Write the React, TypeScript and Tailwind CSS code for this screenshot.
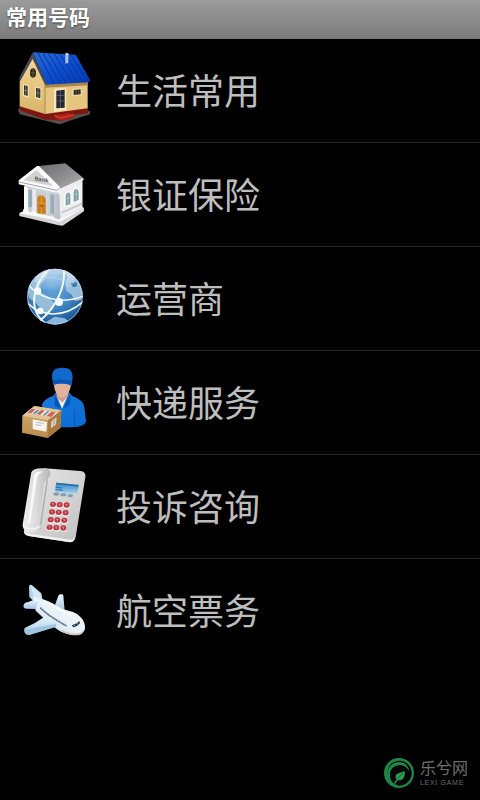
import React from 'react';

const HouseIcon = () => (
  <svg viewBox="0 3 270 270" className="size-full" aria-hidden="true">
    <defs>
      <linearGradient id="houseRoof" x1="0" y1="0" x2="1" y2="1">
        <stop offset="0" stopColor="#2a6cd8" />
        <stop offset="0.5" stopColor="#0b4fd0" />
        <stop offset="1" stopColor="#0736b0" />
      </linearGradient>
      <linearGradient id="houseWall" x1="0" y1="0" x2="0" y2="1">
        <stop offset="0" stopColor="#f2d793" />
        <stop offset="1" stopColor="#d9b46a" />
      </linearGradient>
    </defs>
    <path d="M24 197L28 188L105 214L240 198V208L176 228L150 238L30 208Z" fill="#55504e" />
    <path d="M29 182L105 204L234 188V204L192 210V218L153 228L130 224L105 224L29 196Z" fill="#7e1512" />
    <path d="M133 211L176 204L192 209V218L153 228L133 219Z" fill="#a92118" />
    <path d="M133 211L153 219L192 209" fill="none" stroke="#d44a38" strokeWidth="3" />
    <path d="M67 38L29 108V184L105 207V115Z" fill="url(#houseWall)" />
    <path d="M105 115L233 108V190L105 207Z" fill="#e5c580" />
    <path d="M105 115L233 108V121L105 128Z" fill="#a88649" />
    <path d="M105 118V207" stroke="#b18b4a" strokeWidth="3" />
    <path d="M68 22L197 29L241 106L236 112L111 119Z" fill="url(#houseRoof)" />
    <path d="M84 24L132 116M100 25L150 115M116 26L168 114M133 27L186 113M150 28L203 112M167 29L219 111M183 30L233 109" stroke="#07369b" strokeWidth="3" />
    <path d="M68 23L27 100L31 107L68 42L105 119L112 119Z" fill="#4b4a5c" />
    <path d="M166 30L175 27V53L166 56Z" fill="#a8c4e8" />
    <path d="M164 27L170 23L178 27L172 31Z" fill="#d4def0" />
    <ellipse cx="69" cy="84" rx="9" ry="14" fill="#282421" />
    <path d="M69 71V97M61 84H77" stroke="#8d7444" strokeWidth="2" />
    <path d="M39 117L56 120V158L39 153ZM75 124L94 128V165L75 160Z" fill="#f7e6b5" />
    <path d="M42 121L53 123V153L42 149ZM78 128L91 131V160L78 156Z" fill="#29313f" />
    <path d="M47 122V151M84 129V158M42 136L53 138M78 143L91 145" stroke="#ad9865" strokeWidth="2" />
    <path d="M132 131L169 128V196L132 201Z" fill="#f5e5bd" />
    <path d="M139 137L164 134V188L139 190Z" fill="#22262f" />
    <path d="M151 136V188M139 151H164M139 168H164" stroke="#70778a" strokeWidth="2" />
    <path d="M187 132L215 129V151L187 154Z" fill="#f3dfad" />
    <path d="M191 135L212 133V148L191 150Z" fill="#282b30" />
    <path d="M198 134V149M205 133V148" stroke="#8e8058" strokeWidth="1.5" />
  </svg>
);

const BankIcon = () => (
  <svg viewBox="0 0 270 270" className="size-full" aria-hidden="true">
    <defs>
      <linearGradient id="bankRoof" x1="0" y1="0" x2="1" y2="1">
        <stop offset="0" stopColor="#6d6d70" />
        <stop offset="0.6" stopColor="#929294" />
        <stop offset="1" stopColor="#b9b9bb" />
      </linearGradient>
      <linearGradient id="bankColumn" x1="0" y1="0" x2="1" y2="0">
        <stop offset="0" stopColor="#ffffff" />
        <stop offset="1" stopColor="#b9bdc8" />
      </linearGradient>
    </defs>
    <path d="M28 190L55 176L198 164L222 174V184L158 227L146 226L28 198Z" fill="#d5d5d8" />
    <path d="M28 190L55 178L207 169L222 174L153 214Z" fill="#fafafa" />
    <path d="M44 98L147 119L217 88V175L154 205L44 184Z" fill="#cbd0d8" />
    <path d="M143 122L217 88V173L153 205Z" fill="#eeeef0" />
    <path d="M55 119L68 121V172L55 171ZM117 132L133 135V194L117 187Z" fill="#91afb8" />
    <path d="M66 122L82 125V185L66 180ZM106 128L121 132V193L106 189Z" fill="#b3b9c7" />
    <path d="M79 190V145C80 130 103 128 108 147V194Z" fill="#d8c19b" />
    <path d="M82 189V147C83 133 103 133 107 149V192Z" fill="#c47c20" />
    <path d="M94 139V191M85 158L105 161" stroke="#ed9f36" strokeWidth="3" />
    <circle cx="95" cy="167" r="3" fill="#7d440d" />
    <path d="M42 109L54 112V184L42 180ZM67 116L79 119V190L67 187ZM108 124L121 128V202L108 197ZM132 130L149 135V211L132 205Z" fill="url(#bankColumn)" />
    <path d="M39 178L57 183V189L39 184ZM64 184L82 189V195L64 190ZM105 195L123 200V207L105 202ZM129 204L151 210V217L129 211Z" fill="#f9f9fa" />
    <path d="M85 48L166 40L220 84V91L149 119Z" fill="url(#bankRoof)" />
    <path d="M81 48L26 91V103L140 128L152 120L149 110L87 48Z" fill="#fafafa" />
    <path d="M80 60L40 91L130 109Z" fill="#d2d2d3" />
    <path d="M28 96L140 121L149 116" fill="none" stroke="#a5a5a8" strokeWidth="3" />
    <path d="M149 119L220 87" stroke="#f2f2f3" strokeWidth="5" />
    <text x="73" y="91" fontFamily="Liberation Sans, sans-serif" fontSize="17" fontWeight="bold" fill="#555558" transform="rotate(9 73 91)">Bank</text>
    <path d="M163 172V137C167 121 181 119 184 132V166ZM188 160V128C189 109 206 106 209 123V153Z" fill="#ffffff" />
    <path d="M167 167V138C169 125 179 125 181 134V163ZM191 156V128C193 113 203 113 206 125V150Z" fill="#7d9ba3" />
    <path d="M174 129V164M169 146L179 143M199 116V152M193 134L204 130" stroke="#cad4d7" strokeWidth="2" />
    <path d="M154 188L216 161" stroke="#c1c2c7" strokeWidth="5" />
  </svg>
);

const GlobeIcon = () => (
  <svg viewBox="-15 -3 270 270" className="size-full" aria-hidden="true">
    <defs>
      <radialGradient id="globeSea" cx="0.45" cy="0.3" r="0.7">
        <stop offset="0" stopColor="#69a9dc" />
        <stop offset="0.55" stopColor="#4389c7" />
        <stop offset="1" stopColor="#19558e" />
      </radialGradient>
      <linearGradient id="globeShine" x1="0" y1="0" x2="0" y2="1">
        <stop offset="0" stopColor="#ffffff" stopOpacity="0.7" />
        <stop offset="1" stopColor="#ffffff" stopOpacity="0" />
      </linearGradient>
      <clipPath id="globeClip">
        <circle cx="120" cy="125" r="84" />
      </clipPath>
    </defs>
    <circle cx="120" cy="125" r="84" fill="url(#globeSea)" />
    <g clipPath="url(#globeClip)">
      <path d="M35 96L49 68L76 45L101 53L88 75L76 88L78 112L102 127L119 145L113 164L95 174L79 166L65 146L42 128Z" fill="#aac9df" opacity="0.8" />
      <path d="M145 42L171 54L194 83L205 113L198 135L180 138L169 118L154 109L151 82L158 65Z" fill="#a7c8e0" opacity="0.85" />
      <path d="M166 84L184 82L187 93L174 97Z" fill="#3c79ae" />
      <path d="M119 185L150 190L166 204L125 214L92 202Z" fill="#8ab7db" />
      <ellipse cx="120" cy="73" rx="60" ry="36" fill="url(#globeShine)" />
      <g fill="none" stroke="#eef8ff">
        <path d="M31 77C61 127 137 153 210 122" strokeWidth="5" />
        <path d="M36 143C80 188 148 190 206 139" strokeWidth="5" />
        <path d="M103 43C64 75 45 137 66 176C71 187 80 196 91 206" strokeWidth="6" />
        <path d="M146 39C153 94 125 156 73 199" strokeWidth="6" />
        <path d="M53 83C67 68 104 61 142 75" stroke="#c3e1f5" strokeWidth="2" />
      </g>
    </g>
    <circle cx="120" cy="125" r="82" fill="none" stroke="#b7d9ef" strokeOpacity="0.6" strokeWidth="3" />
    <circle cx="68" cy="108" r="11" fill="#f2faff" />
    <circle cx="132" cy="141" r="12" fill="#f2faff" />
    <circle cx="76" cy="168" r="10" fill="#f2faff" />
  </svg>
);

const CourierIcon = () => (
  <svg viewBox="0 -6 270 270" className="size-full" aria-hidden="true">
    <defs>
      <linearGradient id="courierShirt" x1="0" y1="0" x2="1" y2="1">
        <stop offset="0" stopColor="#1c7ae0" />
        <stop offset="1" stopColor="#086bd1" />
      </linearGradient>
      <linearGradient id="courierBox" x1="0" y1="0" x2="0" y2="1">
        <stop offset="0" stopColor="#d2ad72" />
        <stop offset="1" stopColor="#b88c4b" />
      </linearGradient>
    </defs>
    <path d="M96 135C99 122 112 114 130 107L139 95H176L187 109C211 118 221 126 223 143L228 181C229 194 214 201 185 202H108Z" fill="url(#courierShirt)" />
    <path d="M142 112L156 146L171 112L168 104H146Z" fill="#f3f6fb" />
    <path d="M140 94H174V108L157 128L140 111Z" fill="#d69c83" />
    <path d="M131 66H184C183 88 172 112 157 113C141 111 132 92 131 66Z" fill="#e4b39c" />
    <path d="M126 48C127 29 137 23 158 23C178 23 187 32 188 50L185 76C174 67 143 67 129 75Z" fill="#1269cd" />
    <path d="M129 61C145 57 170 57 186 63L184 77C169 69 144 70 130 75Z" fill="#0756b8" />
    <path d="M134 100L154 146L134 138ZM181 100L159 146L181 134Z" fill="#0757b7" />
    <path d="M194 148V197" stroke="#085abc" strokeWidth="3" />
    <path d="M37 167L73 138L154 151L151 204L113 234L36 218Z" fill="url(#courierBox)" />
    <path d="M37 167L73 138L154 151L114 181Z" fill="#e0c494" />
    <path d="M114 181L154 151L151 204L113 234Z" fill="#a9793d" />
    <path d="M51 158L66 145L142 158L126 172Z" fill="#eee9e1" />
    <path d="M52 158L65 146L77 148L64 160ZM79 162L94 150L104 152L90 165ZM109 168L124 155L137 157L124 171Z" fill="#ca625a" />
    <path d="M68 160L82 149L89 150L75 162ZM98 166L113 153L119 154L104 167Z" fill="#648ba4" />
    <path d="M68 178L111 186L109 215L68 207Z" fill="#f8f5ef" />
    <path d="M78 187L101 190M77 194L94 197" stroke="#909ca9" strokeWidth="2" />
    <path d="M124 184L140 172L138 193L123 205Z" fill="#dddad2" />
    <path d="M128 187L136 181M128 194L136 188" stroke="#93652e" strokeWidth="2" />
  </svg>
);

const keypadRows = [
  [128, 133],
  [125, 156],
  [121, 179],
  [118, 202],
];

const PhoneIcon = () => (
  <svg viewBox="0 6 270 270" className="size-full" aria-hidden="true">
    <defs>
      <linearGradient id="phoneBody" x1="0" y1="0" x2="1" y2="1">
        <stop offset="0" stopColor="#e6e6e6" />
        <stop offset="0.6" stopColor="#d1d1d1" />
        <stop offset="1" stopColor="#bfbfbf" />
      </linearGradient>
      <linearGradient id="phoneHandset" x1="0" y1="0" x2="1" y2="0">
        <stop offset="0" stopColor="#eeeeee" />
        <stop offset="0.5" stopColor="#dcdcdc" />
        <stop offset="1" stopColor="#b4b4b4" />
      </linearGradient>
      <linearGradient id="phoneScreen" x1="0" y1="0" x2="0" y2="1">
        <stop offset="0" stopColor="#2f82c4" />
        <stop offset="1" stopColor="#a4d3ef" />
      </linearGradient>
    </defs>
    <path d="M103 25L211 33C223 35 228 41 226 51L197 232C195 242 188 247 177 246L57 228C45 226 40 220 42 211L67 40Z" fill="url(#phoneBody)" />
    <path d="M43 213L58 221L180 239C189 240 193 236 195 229L193 238C190 246 185 248 175 246L55 228C47 226 42 222 43 213Z" fill="#f1f1f1" />
    <path d="M112 58L90 208" stroke="#aaaaaa" strokeWidth="4" />
    <path d="M64 37C70 26 85 23 109 26C121 28 123 38 119 49C115 59 104 60 102 70L86 182C86 190 94 191 93 199C90 214 75 220 57 217C43 213 37 204 38 193Z" fill="url(#phoneHandset)" />
    <path d="M73 42C76 35 88 33 101 35C88 37 82 46 80 58L61 187L53 199Z" fill="#fafafa" />
    <path d="M40 196C50 209 76 211 89 198" fill="none" stroke="#f8f8f8" strokeWidth="4" />
    <path d="M139 68L206 75L202 101L134 94Z" fill="url(#phoneScreen)" />
    <path d="M139 68L206 75L205 80L138 73Z" fill="#286da8" />
    <path d="M137 82L157 84M137 89L158 91" stroke="#216cae" strokeWidth="3" />
    <g fill="#7f9fb3">
      <ellipse cx="139" cy="102" rx="9" ry="5" />
      <ellipse cx="160" cy="104" rx="9" ry="5" />
      <ellipse cx="181" cy="107" rx="8" ry="5" />
    </g>
    {keypadRows.map(([x, y]) => (
      <g key={y}>
        {[0, 20, 41].map((dx) => (
          <g key={dx}>
            <ellipse cx={x + dx + 2} cy={y + 3 + dx / 20} rx="10" ry="9" fill="#f1f1f1" />
            <ellipse cx={x + dx + 1} cy={y + dx / 20} rx="9" ry="8" fill="#bc3440" />
            <path d={`M${x + dx - 3} ${y - 2 + dx / 20}h7m-3 0v6`} stroke="#eda1a5" strokeWidth="2" />
          </g>
        ))}
      </g>
    ))}
  </svg>
);

const PlaneIcon = () => (
  <svg viewBox="0 -12 270 270" className="size-full" aria-hidden="true">
    <defs>
      <linearGradient id="planeBody" x1="1" y1="0" x2="0" y2="1">
        <stop offset="0" stopColor="#ffffff" />
        <stop offset="0.6" stopColor="#e3eff7" />
        <stop offset="1" stopColor="#9db9d2" />
      </linearGradient>
      <linearGradient id="planeWing" x1="0" y1="0" x2="0" y2="1">
        <stop offset="0" stopColor="#e8f5fd" />
        <stop offset="1" stopColor="#a5c9e3" />
      </linearGradient>
    </defs>
    <path d="M134 108L145 77C149 71 159 72 160 77L164 122Z" fill="url(#planeWing)" />
    <path d="M57 49C57 43 65 43 68 47L94 70L98 91L73 96L58 81Z" fill="#b2d4e9" />
    <path d="M63 47L92 72L92 87L71 82Z" fill="#d2e8f5" />
    <path d="M68 80L99 88C118 93 137 106 157 117L189 126C211 136 224 151 225 170C226 187 213 194 198 193C177 194 158 190 139 176L103 146L77 122Z" fill="url(#planeBody)" />
    <path d="M71 89L86 95L76 117L49 116C39 115 39 107 43 101C48 95 60 96 71 89Z" fill="url(#planeWing)" />
    <path d="M106 139L143 151L137 169L95 183L58 194C46 196 40 186 44 174L76 158Z" fill="url(#planeWing)" />
    <path d="M45 178C63 177 108 166 139 162L137 171L58 195C47 195 43 189 45 178Z" fill="#a0c5e1" />
    <path d="M91 113C109 132 139 151 170 168" fill="none" stroke="#52677d" strokeWidth="5" strokeDasharray="4 1" />
    <path d="M186 165C194 164 202 159 208 153L210 159C206 165 199 171 189 172Z" fill="#25364c" />
    <path d="M191 164L196 169M200 159L204 164" stroke="#dbe9f2" strokeWidth="2" />
    <path d="M153 178C171 191 208 197 222 179C221 190 211 197 198 196C176 196 160 190 153 178Z" fill="#d3c3b8" />
    <path d="M102 94C128 103 150 124 184 133" fill="none" stroke="#ffffff" strokeWidth="4" />
  </svg>
);

const categories = [
  { label: '生活常用', Icon: HouseIcon },
  { label: '银证保险', Icon: BankIcon },
  { label: '运营商', Icon: GlobeIcon },
  { label: '快递服务', Icon: CourierIcon },
  { label: '投诉咨询', Icon: PhoneIcon },
  { label: '航空票务', Icon: PlaneIcon },
];

const Watermark = () => (
  <div className="absolute right-3 bottom-3 flex items-center gap-1.5">
    <svg viewBox="0 0 90 90" className="size-[30px]" aria-hidden="true">
      {/* ring, heavier on the left, curling in at the lower left */}
      <path d="M45 0A45 45 0 0 0 0 45C0 70 20 90 45 90C70 90 90 70 90 45C90 20 70 0 45 0ZM46 8C68 8 83 25 83 46C83 66 67 82 47 83C30 82 17 69 17 52C17 33 30 21 47 21C61 21 71 29 76 40C73 23 61 13 45 13C25 13 12 28 11 47C9 25 25 8 46 8Z" fill="#198a47" fillRule="evenodd" />
      <path d="M12 46C12 25 26 13 45 13C61 13 73 23 76 40C71 29 61 21 47 21C30 21 17 33 17 52C17 62 21 70 28 76C18 70 12 60 12 46Z" fill="#198a47" />
      <path d="M62 38C65 58 55 69 43 67C34 65 32 55 38 49C45 42 54 45 62 38Z" fill="#239b50" />
      <path d="M56 46C48 53 43 58 36 67" fill="none" stroke="#064b22" strokeWidth="2" />
      <path d="M41 63L31 77" stroke="#239b50" strokeWidth="4" />
    </svg>
    <div className="flex flex-col text-[#6e6e6e]">
      <span className="text-[16px] leading-5">乐兮网</span>
      <span className="text-[7px] leading-2 tracking-widest">LEXI GAME</span>
    </div>
  </div>
);

export default function App() {
  return (
    <div className="relative min-h-screen bg-black font-['Liberation_Sans','Noto_Sans_CJK_SC',sans-serif]">
      {/* Title bar */}
      <header className="flex h-[39px] items-center bg-linear-to-b from-[#9b9b9b] to-[#7b7b7b] px-1.5 pb-1">
        <h1 className="text-[21px] leading-6 font-bold text-white [text-shadow:0_1px_2px_#444]">常用号码</h1>
      </header>

      {/* Category list */}
      <main>
        <ul>
          {categories.map(({ label, Icon }) => (
            <li key={label} className="border-b border-[#282828] last:border-transparent">
              <button type="button" className="flex w-full items-center gap-4 px-2.5 pt-[7px] pb-1.5 text-left">
                <span className="size-[90px] shrink-0">
                  <Icon />
                </span>
                <span className="pt-1 text-[36px] leading-10 text-[#bebebe]">{label}</span>
              </button>
            </li>
          ))}
        </ul>
      </main>

      <Watermark />
    </div>
  );
}
